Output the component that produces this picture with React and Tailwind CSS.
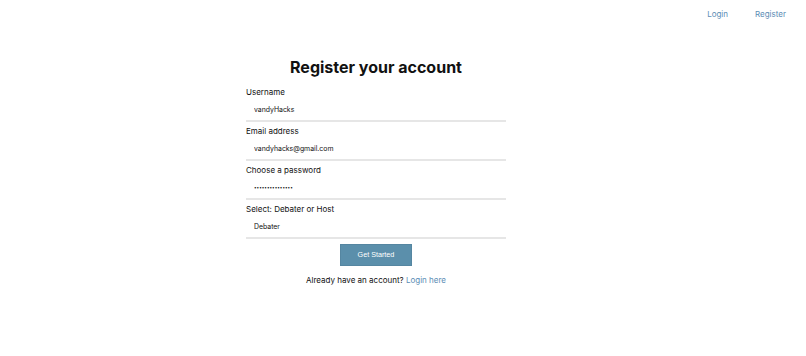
import { useState } from 'react';

function Field({ label, type = 'text', value, onChange }) {
  const size = type === 'password' ? 'text-[4.6px]' : 'text-[6.9px]';
  return (
    <div className="flex flex-col mb-[2px]">
      <label className="text-[8px] leading-[14px] text-[#111]">{label}</label>
      <input
        type={type}
        value={value}
        onChange={onChange}
        className={`h-[23px] px-2 pb-px ${size} text-[#111] bg-white border-b-2 border-[#e6e6e6] outline-none`}
      />
    </div>
  );
}

export default function App() {
  const [form, setForm] = useState({
    username: 'vandyHacks',
    email: 'vandyhacks@gmail.com',
    password: 'vandyhacks12345',
    role: 'Debater',
  });

  const update = (key) => (e) => setForm({ ...form, [key]: e.target.value });

  return (
    <div className="min-h-screen bg-white font-['Inter',sans-serif] text-[#111]">
      {/* Nav */}
      <nav className="flex justify-end items-center gap-[27px] pr-[20px] pt-[7px] text-[8px] leading-[14px] text-[#5b8db5]">
        <a href="#">Login</a>
        <a href="#">Register</a>
      </nav>

      <div className="w-[260px] ml-[246px] flex flex-col">
        <h1 className="mt-[36px] text-center text-[16px] leading-[20px] font-bold">Register your account</h1>

        <form className="mt-[8px] flex flex-col">
          <Field label="Username" value={form.username} onChange={update('username')} />
          <Field label="Email address" value={form.email} onChange={update('email')} />
          <Field label="Choose a password" type="password" value={form.password} onChange={update('password')} />
          <Field label="Select: Debater or Host" value={form.role} onChange={update('role')} />

          <button
            type="button"
            className="mt-[3px] self-center w-[72px] h-[22px] bg-[#5b8fab] border border-[#5586a1] text-white text-[7.2px] font-['Liberation_Sans',sans-serif]"
          >
            Get Started
          </button>
        </form>

        <p className="mt-[7px] text-center text-[8px] leading-[14px]">
          Already have an account? <a href="#" className="text-[#5b8db5]">Login here</a>
        </p>
      </div>
    </div>
  );
}
